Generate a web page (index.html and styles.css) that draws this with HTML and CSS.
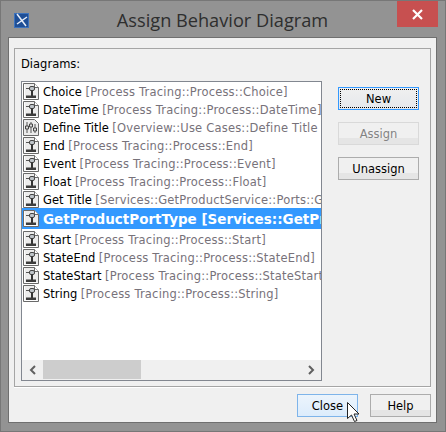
FILE: index.html
```html
<!DOCTYPE html>
<html lang="en">
<head>
  <meta charset="UTF-8">
  <meta name="viewport" content="width=device-width, initial-scale=1.0">
  <title>Assign Behavior Diagram</title>
  <link rel="stylesheet" href="styles.css">
</head>
<body>
  <svg class="defs" width="0" height="0">
    <symbol id="state" viewBox="0 0 16 17">
      <path d="M.5.5h11l4 4v12H.5z" fill="#ececec" stroke="#6a6a6a"/>
      <path d="M1.500 1.500v14h13" fill="none" stroke="#fff"/>
      <path d="M11.500.5v4h4" fill="#fff" stroke="#6a6a6a"/>
      <path d="M3 5.500h4" stroke="#555"/>
      <rect x="6.500" y="3.500" width="5" height="4" rx="1.500" fill="#bfc5ca" stroke="#444"/>
      <path d="M9 7.500V13" stroke="#333" stroke-width="2"/>
      <rect x="3" y="12.500" width="10" height="2.500" fill="#3c3c3c"/>
    </symbol>
    <symbol id="usecase" viewBox="0 0 16 17">
      <path d="M.5.5h11l4 4v12H.5z" fill="#ececec" stroke="#6a6a6a"/>
      <path d="M4 3v11M8 3v11M12 5v9" stroke="#555"/>
      <path d="M2.500 7h3v3h-3zM6.500 5h3v3h-3zM10.500 9h3v3h-3z" fill="#ddd" stroke="#444"/>
    </symbol>
  </svg>

  <div class="window">
    <!-- Title bar -->
    <div class="titlebar">
      <svg class="app-icon" width="15" height="15" viewBox="0 0 15 15">
        <rect width="15" height="15" fill="#1f4f96"/>
        <rect x=".5" y=".5" width="14" height="14" fill="none" stroke="#3d73bd"/>
        <path d="M3 1l9 12M13 4L3 11" stroke="#e8eef8" stroke-width="1.500"/>
      </svg>
      <span class="title">Assign Behavior Diagram</span>
      <button class="close-x" type="button">
        <svg width="11" height="11" viewBox="0 0 11 11"><path d="M1 1l9 9M10 1l-9 9" stroke="#fff" stroke-width="2.200"/></svg>
      </button>
    </div>

    <div class="content">
      <!-- Diagrams group -->
      <div class="group">
        <div class="group-left">
          <div class="group-label">Diagrams:</div>
          <div class="list-box">
            <ul class="list">
              <li><svg class="ico"><use href="#state"/></svg>Choice <span class="path">[Process Tracing::Process::Choice]</span></li>
              <li><svg class="ico"><use href="#state"/></svg>DateTime <span class="path">[Process Tracing::Process::DateTime]</span></li>
              <li><svg class="ico"><use href="#usecase"/></svg>Define Title <span class="path">[Overview::Use Cases::Define Title S</span></li>
              <li><svg class="ico"><use href="#state"/></svg>End <span class="path">[Process Tracing::Process::End]</span></li>
              <li><svg class="ico"><use href="#state"/></svg>Event <span class="path">[Process Tracing::Process::Event]</span></li>
              <li><svg class="ico"><use href="#state"/></svg>Float <span class="path">[Process Tracing::Process::Float]</span></li>
              <li><svg class="ico"><use href="#state"/></svg>Get Title <span class="path">[Services::GetProductService::Ports::G</span></li>
              <li class="selected"><svg class="ico"><use href="#state"/></svg>GetProductPortType [Services::GetPr</li>
              <li><svg class="ico"><use href="#state"/></svg>Start <span class="path">[Process Tracing::Process::Start]</span></li>
              <li><svg class="ico"><use href="#state"/></svg>StateEnd <span class="path">[Process Tracing::Process::StateEnd]</span></li>
              <li><svg class="ico"><use href="#state"/></svg>StateStart <span class="path">[Process Tracing::Process::StateStart</span></li>
              <li><svg class="ico"><use href="#state"/></svg>String <span class="path">[Process Tracing::Process::String]</span></li>
            </ul>
            <div class="hscroll">
              <div class="arrow"><svg width="8" height="10" viewBox="0 0 8 10"><path d="M6 1L2 5l4 4" fill="none" stroke="#606060" stroke-width="2"/></svg></div>
              <div class="track"><div class="thumb"></div></div>
              <div class="arrow"><svg width="8" height="10" viewBox="0 0 8 10"><path d="M2 1l4 4-4 4" fill="none" stroke="#606060" stroke-width="2"/></svg></div>
            </div>
          </div>
        </div>
        <div class="side-buttons">
          <button class="btn btn-default" type="button"><span class="focus-ring">New</span></button>
          <button class="btn btn-disabled" type="button">Assign</button>
          <button class="btn" type="button">Unassign</button>
        </div>
      </div>

      <!-- Bottom buttons -->
      <div class="footer">
        <button class="btn btn-hover" type="button">Close</button>
        <button class="btn" type="button">Help</button>
      </div>
    </div>
  </div>

  <svg class="cursor" width="14" height="22" viewBox="0 0 14 22">
    <path d="M.5.5v16l4-3.500 3 6.500 2.500-1-3-6.500h5z" fill="#fff" stroke="#222"/>
  </svg>
</body>
</html>
```
FILE: styles.css
```css
/* General Reset */
body {
  font-family: 'DejaVu Sans', 'Liberation Sans', sans-serif;
  margin: 0;
  padding: 0;
  background: #8f8f8f;
  color: #000;
  font-size: 11.5px;
  width: 446px;
  height: 432px;
  overflow: hidden;
  position: relative;
}

.defs {
  position: absolute;
}

/* Window */
.window {
  box-sizing: border-box;
  width: 446px;
  height: 432px;
  background: #939393;
  border: 1px solid #777;
  padding: 0 8px 8px 7px;
  display: flex;
  flex-direction: column;
}

.titlebar {
  height: 36px;
  display: flex;
  align-items: flex-start;
  position: relative;
  justify-content: center;
}

.app-icon {
  position: absolute;
  left: 6px;
  top: 12px;
}

.title {
  font-family: 'Open Sans', sans-serif;
  font-size: 18.2px;
  line-height: 26px;
  color: #2e2e2e;
  margin-top: 6px;
}

.close-x {
  position: absolute;
  right: -1px;
  top: 0;
  width: 41px;
  height: 26px;
  border: none;
  padding: 0;
  background: #c75050;
  display: flex;
  align-items: center;
  justify-content: center;
}

.content {
  flex: 1;
  background: #f0f0f0;
  border: 1px solid #6f6f6f;
  padding: 10px 5px 5px 5px;
  display: flex;
  flex-direction: column;
}

/* Diagrams group */
.group {
  box-sizing: border-box;
  height: 339px;
  flex: none;
  border: 1px solid #a5a5a5;
  box-shadow: 0 1px 0 #fff;
  display: flex;
  padding: 0 0 5px 6px;
}

.group-left {
  width: 301px;
  display: flex;
  flex-direction: column;
}

.group-label {
  height: 32px;
  line-height: 31px;
  color: #000;
}

.list-box {
  flex: 1;
  background: #fff;
  border: 1px solid #828790;
  display: flex;
  flex-direction: column;
  overflow: hidden;
}

.list {
  list-style: none;
  margin: 0;
  padding: 0;
  flex: 1;
  overflow: hidden;
}

.list li {
  box-sizing: border-box;
  height: 18px;
  padding-top: 1px;
  white-space: nowrap;
  display: flex;
  align-items: center;
  color: #000;
}

.list li .path {
  color: #77727a;
  margin-left: 3.500px;
  letter-spacing: .2px;
}

.ico {
  width: 16px;
  height: 17px;
  margin: 0 4px 0 1px;
  flex: none;
}

.list li.selected {
  height: 21px;
  padding-top: 0;
  background: #3399ff;
  color: #fff;
  font-weight: bold;
  font-size: 13.5px;
  margin-bottom: 1px;
}

.hscroll {
  height: 20px;
  background: #f0f0f0;
  display: flex;
  align-items: flex-start;
  flex: none;
}

.arrow {
  flex: none;
  width: 21px;
  height: 19px;
  display: flex;
  align-items: center;
  justify-content: center;
}

.track {
  flex: 1;
  height: 19px;
}

.thumb {
  width: 98px;
  height: 19px;
  background: #cdcdcd;
}

/* Buttons */
.btn {
  box-sizing: border-box;
  width: 81px;
  height: 23px;
  font-family: inherit;
  font-size: 11.5px;
  color: #000;
  padding: 0;
  border: 1px solid #acacac;
  background: linear-gradient(#f0f0f0 0 70%, #e5e5e5 70%);
}

.side-buttons {
  display: flex;
  flex-direction: column;
  gap: 12px;
  margin-left: 16px;
  padding-top: 38px;
}

.btn-default {
  border-color: #3399ff;
  background: linear-gradient(#f0f0f0, #e5e8ec);
  padding: 1px;
}

.focus-ring {
  display: block;
  height: 100%;
  box-sizing: border-box;
  line-height: 18px;
  border: 1px dotted #000;
}

.btn-disabled {
  color: #838383;
  border-color: #d9d9d9;
}

.footer {
  display: flex;
  justify-content: flex-end;
  gap: 12px;
  margin-top: 7px;
}

.footer .btn {
  width: 61px;
}

.btn-hover {
  border-color: #7eb4ea;
  background: linear-gradient(#ecf4fc, #dcecfc);
}

/* Mouse pointer over the Close button */
.cursor {
  position: absolute;
  left: 347px;
  top: 402px;
}
```
